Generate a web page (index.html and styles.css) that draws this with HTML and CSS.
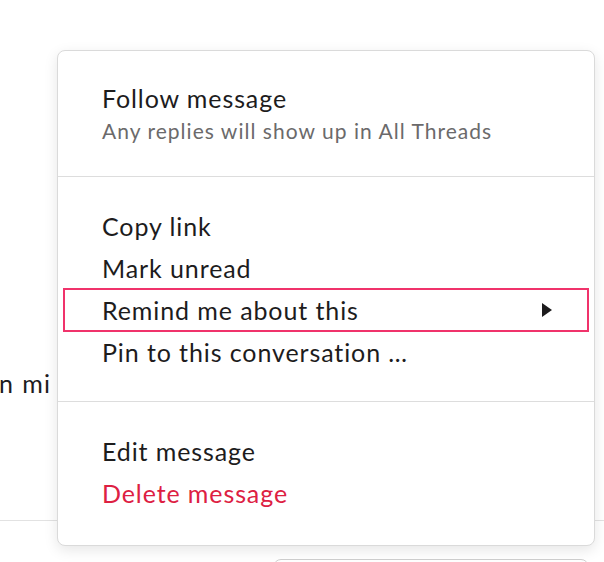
FILE: index.html
```html
<!DOCTYPE html>
<html>
<head>
<meta charset="utf-8">
<link rel="stylesheet" href="styles.css">
</head>
<body>
<div class="page">
  <div class="msg-text">n mi</div>
  <div class="rule"></div>
  <div class="composer"></div>

  <div class="menu">
    <div class="section first">
      <div class="title">Follow message</div>
      <div class="sub">Any replies will show up in All Threads</div>
    </div>
    <div class="section">
      <div class="item">Copy link</div>
      <div class="item">Mark unread</div>
      <div class="item active">Remind me about this<span class="caret"></span></div>
      <div class="item">Pin to this conversation …</div>
    </div>
    <div class="section last">
      <div class="item">Edit message</div>
      <div class="item danger">Delete message</div>
    </div>
  </div>
</div>
</body>
</html>
```
FILE: styles.css
```css
html, body {
  margin: 0;
  padding: 0;
  background: #fff;
}
body {
  font-family: Lato, "Noto Sans", sans-serif;
  color: #1d1c1d;
}
.page {
  position: relative;
  width: 604px;
  height: 562px;
  overflow: hidden;
}
.msg-text {
  padding-top: 363px;
  font-size: 25px;
  letter-spacing: 1.4px;
  line-height: 40px;
  margin-left: -1px;
}
.rule {
  margin-top: 117px;
  height: 1px;
  background: #e2e2e2;
}
.composer {
  margin: 38px 0 0 273px;
  width: 314px;
  height: 40px;
  border: 1px solid #cfcfcf;
  border-radius: 8px;
}
.menu {
  position: absolute;
  left: 57px;
  top: 50px;
  width: 536px;
  border: 1px solid #dadada;
  border-radius: 8px;
  background: #fff;
  box-shadow: 0 4px 14px rgba(0,0,0,0.10);
}
.section {
  padding: 28px 0;
  border-top: 1px solid #dddddd;
}
.section.first {
  border-top: none;
  padding: 28px 0 31px;
}
.section.last {
  padding-bottom: 31px;
}
.title {
  padding-left: 44px;
  font-size: 25px;
  letter-spacing: 0.9px;
  line-height: 38px;
}
.sub {
  padding-left: 44px;
  font-size: 21px;
  letter-spacing: 1.03px;
  line-height: 28px;
  color: #6b6a6b;
}
.item {
  position: relative;
  margin: 0 6px;
  padding-left: 38px;
  height: 42px;
  font-size: 25px;
  letter-spacing: 0.9px;
  line-height: 42px;
}
.item.active {
  outline: 2px solid #f0336b;
  outline-offset: -1px;
}
.item.danger {
  color: #dd2042;
}
.caret {
  position: absolute;
  right: 36px;
  top: 14px;
  width: 0;
  height: 0;
  border-top: 7px solid transparent;
  border-bottom: 7px solid transparent;
  border-left: 10px solid #1d1c1d;
}
```
